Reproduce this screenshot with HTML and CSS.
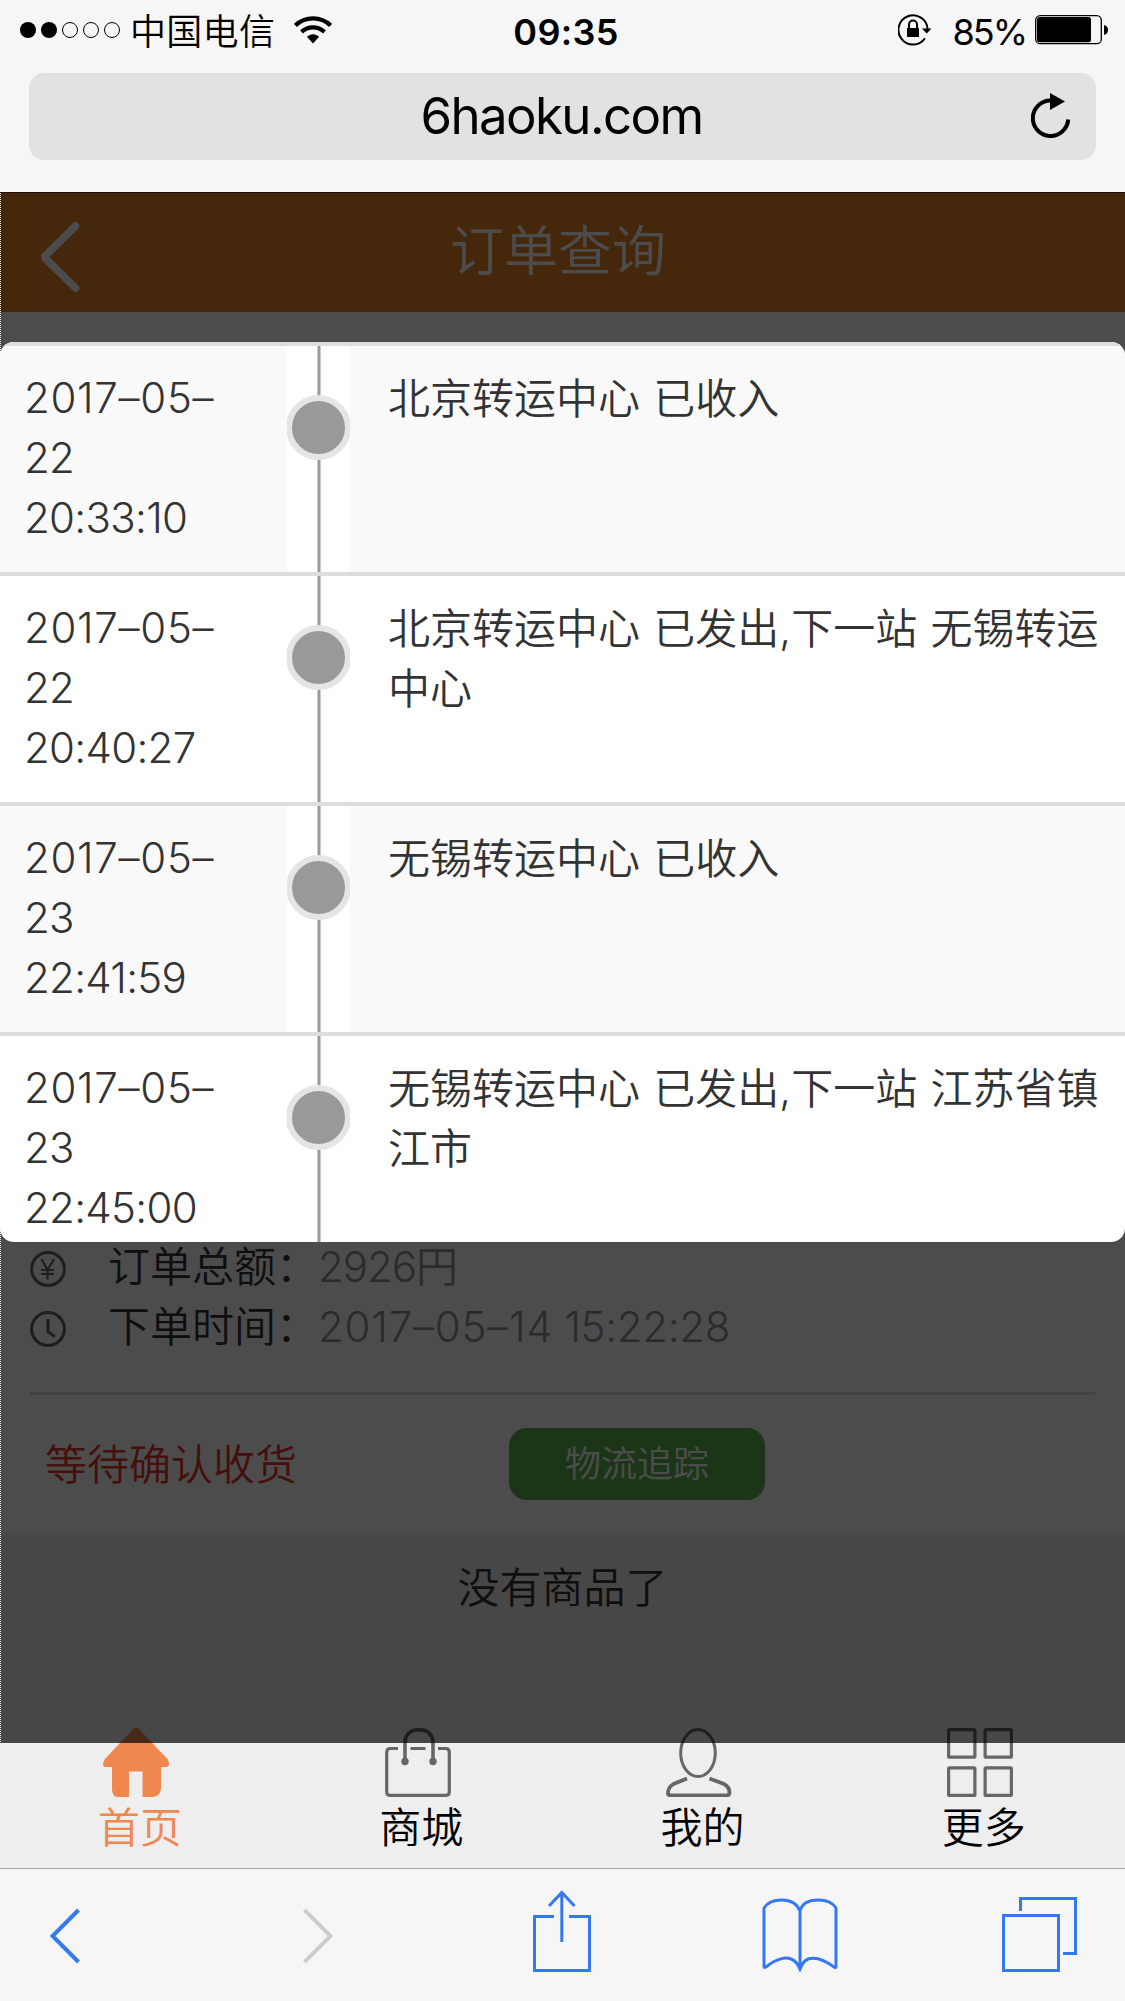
FILE: index.html
```html
<!DOCTYPE html>
<html lang="zh-CN">
<head>
<meta charset="utf-8">
<title>订单查询</title>
<link rel="stylesheet" href="styles.css">
</head>
<body>
<header class="browser-top">
  <div class="status">
    <div class="status-left">
      <svg class="signal" width="102" height="18" viewBox="0 0 102 18"><circle cx="9" cy="9" r="8"/><circle cx="30" cy="9" r="8"/><g fill="none" stroke="#000" stroke-width="1"><circle cx="51" cy="9" r="7.5"/><circle cx="72" cy="9" r="7.5"/><circle cx="93" cy="9" r="7.5"/></g></svg>
      <span class="carrier">中国电信</span>
      <svg class="wifi" width="38" height="28" viewBox="0 0 38 28"><g fill="none" stroke="#000" stroke-width="4.2"><path d="M1.4 9.4C11.200 0 26.800 0 36.600 9.400"/><path d="M7.500 15.900C14 9.800 24 9.800 30.500 15.900"/></g><path d="M19 27.500L12.900 20.800C16.500 17.400 21.500 17.400 25.100 20.800Z"/></svg>
    </div>
    <span class="clock">09:35</span>
    <div class="status-right">
      <svg width="34" height="32" viewBox="0 0 34 32"><path d="M27 24.300A14.600 14.600 0 1 1 29.600 15" fill="none" stroke="#000" stroke-width="2"/><path d="M24 14.500H33.500L28.700 19.500Z"/><rect x="9" y="14" width="12" height="9"/><path d="M11 15V10.500a4 4 0 0 1 8 0V15" fill="none" stroke="#000" stroke-width="2"/></svg>
      <span class="percent">85%</span>
      <svg width="74" height="30" viewBox="0 0 74 30"><rect x=".7" y=".7" width="65.600" height="28" rx="4.500" fill="none" stroke="#000" stroke-width="1.300"/><rect x="2" y="2" width="54" height="25.200" rx="2.500"/><path d="M69 10Q73 11 73 15Q73 19 69 20Z"/></svg>
    </div>
  </div>
  <div class="address">
    <span class="url">6haoku.com</span>
    <svg class="reload" width="42" height="48" viewBox="0 0 42 48"><path d="M37.200 27.500A17.700 17.700 0 1 1 19.500 8.500" fill="none" stroke="#000" stroke-width="4"/><path d="M19 1V18L34 9.500Z"/></svg>
  </div>
</header>
<main class="page">
  <div class="title-bar">
    <svg class="back" width="42" height="70" viewBox="0 0 42 70"><path d="M36.500 4L5 35L36.500 66" fill="none" stroke="#fff" stroke-width="7.500" stroke-linecap="round" stroke-linejoin="bevel"/></svg>
    <h1>订单查询</h1>
  </div>
  <section class="order">
    <div class="info">
      <svg width="36" height="36" viewBox="0 0 36 36"><g fill="none" stroke="#666" stroke-width="2.200"><circle cx="18" cy="18" r="16.400" stroke-width="3"/><path d="M11.500 8L17.500 19L24 8M17.500 19V28.500M11 19H24M11 23H24"/></g></svg>
      <span class="label">订单总额：</span><span class="value">2926円</span>
    </div>
    <div class="info">
      <svg width="36" height="36" viewBox="0 0 36 36"><g fill="none" stroke="#666" stroke-width="3"><circle cx="18" cy="18" r="16.400"/><path d="M18 8V21L25 25.500"/></g></svg>
      <span class="label">下单时间：</span><span class="value"><span class="date">2017–05–14</span> <span class="hours">15:22:28</span></span>
    </div>
    <div class="actions">
      <span class="state">等待确认收货</span>
      <span class="track">物流追踪</span>
    </div>
  </section>
  <p class="empty">没有商品了</p>
  <nav class="tabs">
    <div class="tab active">
      <svg width="66" height="69" viewBox="0 0 66 69"><path d="M30 1Q33-1 36 1L64.500 31Q66 33 66 36Q66 39 63 39H58V61Q57 68 50 69H39.500V43.500H26V69H14Q9 68 9 61V39H3Q0 39 0 36Q0 33 2 31Z" fill="#f0874f"/></svg>
      <span>首页</span>
    </div>
    <div class="tab">
      <svg class="bag" width="66" height="69" viewBox="0 0 66 69"><g fill="none" stroke="#666" stroke-width="3.200"><path d="M13 20.500H5.500Q1.700 20.500 1.700 24V64Q1.700 67.300 5 67.300H61Q64.300 67.300 64.300 64V24Q64.300 20.500 60.500 20.500H53M25.500 20.500H40.500"/><path d="M20 33V15Q20.500 2 34 1.700Q47.500 2 48 15V33" stroke-width="3.600"/></g><circle cx="20" cy="33.500" r="3.700" fill="#666"/><circle cx="48" cy="33.500" r="3.700" fill="#666"/></svg>
      <span>商城</span>
    </div>
    <div class="tab">
      <svg width="66" height="69" viewBox="0 0 66 69"><g fill="none" stroke="#666" stroke-width="3"><ellipse cx="32" cy="25" rx="17.300" ry="23.500"/><path d="M21 50.500L7.500 56Q2 59.500 2 65Q2 67.300 5 67.300H60.500Q63.500 67.300 63.500 64.500Q63.500 59 58 56L43.500 50.500" stroke-width="3.800"/></g></svg>
      <span>我的</span>
    </div>
    <div class="tab">
      <svg width="66" height="69" viewBox="0 0 66 69"><g fill="none" stroke="#666" stroke-width="3.200"><rect x="1.600" y="1.600" width="26.300" height="27.600" rx="1"/><rect x="38.100" y="1.600" width="26.300" height="27.600" rx="1"/><rect x="1.600" y="39.800" width="26.300" height="27.600" rx="1"/><rect x="38.100" y="39.800" width="26.300" height="27.600" rx="1"/></g></svg>
      <span>更多</span>
    </div>
  </nav>
  <div class="shade"></div>
  <div class="dialog">
    <div class="row"><div class="time"><span class="date">2017–05–</span><br>22<br>20:33:10</div><div class="node"><i></i></div><div class="event">北京转运中心 已收入</div></div>
    <div class="row"><div class="time"><span class="date">2017–05–</span><br>22<br>20:40:27</div><div class="node"><i></i></div><div class="event">北京转运中心 已发出,下一站 无锡转运<br>中心</div></div>
    <div class="row"><div class="time"><span class="date">2017–05–</span><br>23<br>22:41:59</div><div class="node"><i></i></div><div class="event">无锡转运中心 已收入</div></div>
    <div class="row"><div class="time"><span class="date">2017–05–</span><br>23<br>22:45:00</div><div class="node"><i></i></div><div class="event">无锡转运中心 已发出,下一站 江苏省镇<br>江市</div></div>
  </div>
</main>
<footer class="toolbar">
  <svg class="t-prev" width="30" height="56" viewBox="0 0 30 56"><path d="M28.500 2L2.500 28L28.500 54"/></svg>
  <svg class="t-next" width="30" height="56" viewBox="0 0 30 56"><path d="M1.500 2L27.500 28L1.500 54"/></svg>
  <svg class="t-share" width="58" height="82" viewBox="0 0 58 82"><path d="M21 26.500H1.500V80.500H56.500V26.500H36M28.800 52V3M16 16L28.800 2.500L41.500 16"/></svg>
  <svg class="t-book" width="76" height="74" viewBox="0 0 76 74"><path d="M38 72V13C35 5.500 29 2 20 2C11 2 5 5 2 10V68.500C2 70 3 69.500 4 69C15 60 24 59 29 61C33 62.500 36 66 38 71C40 66 42 62.500 46 61C52 59 60 60 72 69C73.500 69.500 74 70 74 68.500V10C71 5 64 2 56 2C47 2 40 5.500 38 13"/></svg>
  <svg class="t-pages" width="76" height="76" viewBox="0 0 76 76"><path d="M1.500 19.500H56.500V74.500H1.500ZM18.500 15V2.500H73.500V57.500H61"/></svg>
</footer>
</body>
</html>
```
FILE: styles.css
```css
* { box-sizing: border-box; }
body {
  margin: 0;
  width: 1125px;
  height: 2001px;
  overflow: hidden;
  background: #f6f6f6;
  font-family: "Inter", "Noto Sans CJK SC", sans-serif;
  font-size: 42px;
  font-weight: 350;
  color: #333;
}
svg { display: block; flex: none; }

.browser-top { height: 192px; padding: 0 29px; background: #f6f6f6; color: #000; }
.status {
  height: 73px;
  margin: 0 -13px 0 -10px;
  padding-bottom: 13px;
  display: grid;
  grid-template-columns: 1fr auto 1fr;
  align-items: center;
}
.status-left { display: flex; align-items: center; }
.carrier { margin-left: 9px; font-size: 36px; line-height: 50px; padding-top: 3px; letter-spacing: .3px; }
.wifi { margin-left: 19px; }
.clock { font-size: 36px; font-weight: 600; line-height: 50px; padding: 3px 0 0 4px; letter-spacing: .3px; }
.status-right { display: flex; align-items: center; justify-content: flex-end; }
.percent { margin: 0 9px 0 20px; padding-top: 3px; font-size: 36px; font-weight: 400; line-height: 50px; letter-spacing: -2px; }
.address {
  height: 87px;
  border-radius: 15px;
  background: #e2e2e2;
  display: grid;
  grid-template-columns: 65px 1fr 65px;
  align-items: center;
}
.url { grid-column: 2; margin: 0 2px 2px 0; text-align: center; font-size: 51px; font-weight: 400; letter-spacing: -1.6px; }
.reload { margin-bottom: 2px; }

.page { position: relative; height: 1677px; background: #eee; border-bottom: 1px solid #a6a6a6; }
.title-bar {
  height: 120px;
  background: #e6852a;
  border-top: 1px solid #663300;
  padding: 0 48px 0 39px;
  display: grid;
  grid-template-columns: 42px 1fr 42px;
  align-items: center;
  color: #fff;
}
.back { margin-top: 8px; }
h1 { margin: 0 0 2px; text-align: center; font-size: 54px; font-weight: 350; line-height: 80px; }
.order {
  height: 1221px;
  padding: 0 30px;
  background: #fff;
  display: flex;
  flex-direction: column;
  justify-content: flex-end;
}
.info { display: flex; align-items: center; height: 60px; line-height: 60px; }
.info svg { margin: 4px 42px 0 0; }
.label { width: 210px; white-space: nowrap; }
.value { color: #909090; letter-spacing: -1px; }
.date { letter-spacing: .8px; }
.hours { letter-spacing: -.3px; }
.actions {
  margin-top: 35px;
  height: 141px;
  border-top: 3px solid #d9d9d9;
  padding: 33px 0 33px 15px;
  display: flex;
  align-items: center;
}
.state { width: 464px; padding-bottom: 5px; color: #e6352a; }
.track {
  width: 256px;
  height: 72px;
  border-radius: 18px;
  background: #5db44d;
  color: #fff;
  font-size: 36px;
  line-height: 72px;
  text-align: center;
}
.empty { margin: 0; height: 187px; padding-top: 25px; text-align: center; line-height: 60px; }
.tabs { height: 148px; padding-top: 8px; display: grid; grid-template-columns: repeat(4, 1fr); color: #000; }
.tab { display: flex; flex-direction: column; align-items: center; }
.tab svg { margin-right: 9px; }
.tab .bag { margin-right: 7px; }
.tab span { margin-right: 1px; line-height: 62px; }
.active { color: #f0874f; }

.shade {
  position: absolute;
  inset: 0 0 auto 0;
  height: 1551px;
  background: rgba(0, 0, 0, .7);
}
.shade::before {
  content: "";
  display: block;
  width: 1px;
  height: 1550px;
  margin-top: 1px;
  background: repeating-linear-gradient(#eee 0 1px, transparent 1px 2px);
}
.dialog {
  position: absolute;
  top: 150px;
  left: 0;
  width: 1125px;
  height: 900px;
  border-radius: 14px;
  overflow: hidden;
  background: #fff;
}
.row {
  height: 230px;
  border-top: 4px solid #ddd;
  display: grid;
  grid-template-columns: 287px 63px 1fr;
  line-height: 60px;
}
.row:nth-child(odd) { background: #f9f9f9; }
.time { padding: 22px 0 0 24px; letter-spacing: -.7px; }
.time .date { letter-spacing: .7px; }
.event { padding: 23px 0 0 38px; white-space: nowrap; word-spacing: 1.5px; }
.node {
  overflow: hidden;
  padding-top: 49px;
  background: linear-gradient(90deg, #ccc 1px, #999 1px 3px, #ccc 3px) 30px 0 / 4px 100% no-repeat #fff;
}
.node i {
  display: block;
  width: 65px;
  height: 65px;
  margin-left: -1px;
  border: 6px solid #e5e5e5;
  border-radius: 50%;
  background: #999;
}

.toolbar { height: 132px; display: flex; background: #f6f6f6; }
.toolbar path { fill: none; stroke: #3478f6; stroke-width: 3; }
.toolbar .t-prev path { stroke-width: 4; }
.toolbar .t-next path { stroke: #ccc; stroke-width: 4; }
.t-prev { margin: 39px 0 0 50px; }
.t-next { margin: 39px 0 0 223px; }
.t-share { margin: 21px 0 0 200px; }
.t-book { margin: 29px 0 0 171px; }
.t-pages { margin: 27px 0 0 164px; }
```
